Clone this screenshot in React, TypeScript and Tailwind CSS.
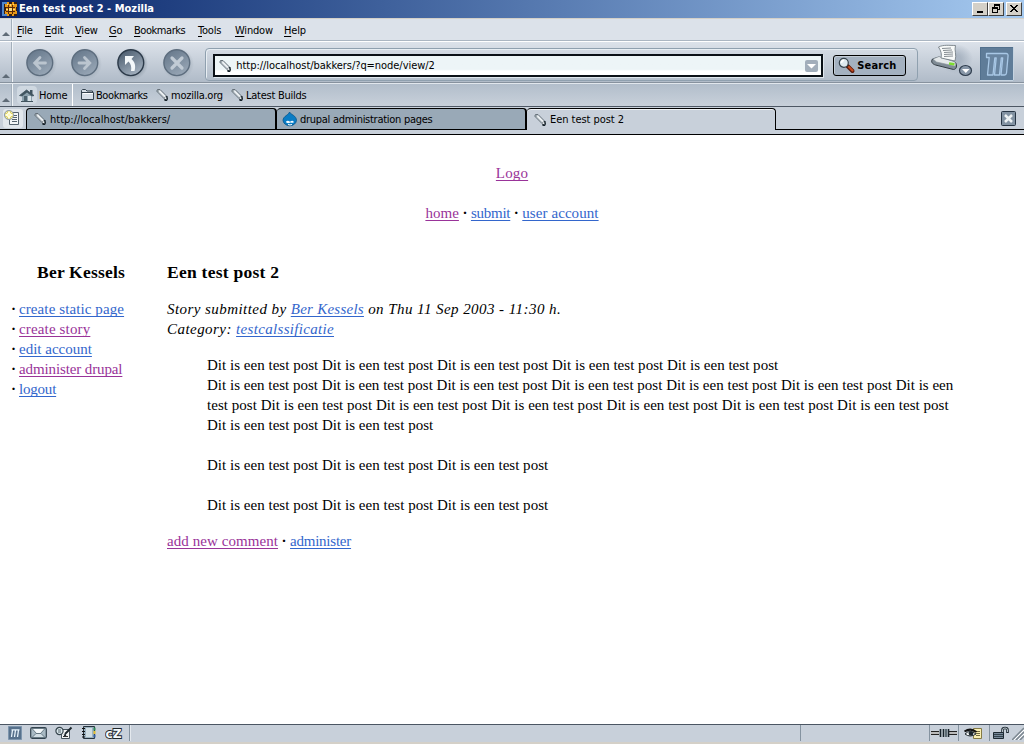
import React from "react";

const ui = "font-['DejaVu_Sans_Condensed','DejaVu_Sans',sans-serif]";

function MozillaAppIcon() {
  return (
    <svg width="16" height="16" viewBox="0 0 16 16" shapeRendering="crispEdges">
      <rect x="1" y="1" width="14" height="14" fill="#3a2010" />
      <path d="M0 1h5v2H2v10h3v2H0z" fill="#4f86cc" />
      <path d="M3 3h2V1h2v2h3V1h2v2h3v3h-1v4h1v3h-3v2h-2v-2H7v2H5v-2H3v-3h1V6H3z" fill="#e89818" />
      <path d="M6 4h1v2h3V4h1v2h2v1h-2v3h2v1h-2v2h-1v-2H7v2H6v-2H4v-1h2V7H4V6h2z" fill="#5a2808" />
      <path d="M7 7h3v3H7z" fill="#ffe080" />
      <path d="M5 3h1v1H5zm3 0h1v2H8zm3 0h1v1h-1zM4 8h2v1H4zm7 0h2v1h-2z" fill="#ffe080" />
    </svg>
  );
}

function TagIcon() {
  return (
    <svg width="14" height="14" viewBox="0 0 14 14" className="shrink-0">
      <path d="M2.500 1.500h2.500l6.500 6.500-2.500 2.500-7-7V2.500z" fill="#c3cbd1" stroke="#5c6870" strokeWidth=".9" />
      <path d="m4.500 3 5.500 5.500" stroke="#f4f7f8" strokeWidth="1.200" />
      <path d="m11.500 8 1 3-1 1-2.500-1" fill="#e6eaec" stroke="#17222a" />
      <path d="M12 8v4.500H9.500" fill="none" stroke="#17222a" />
      <path d="M2.500 2.500h1v1h-1z" fill="#46545e" />
    </svg>
  );
}

function RoundIcon({ id, kind }: { id: string; kind: "back" | "forward" | "reload" | "stop" }) {
  const active = kind === "reload";
  return (
    <svg width="34" height="34" viewBox="0 0 34 34">
      <defs>
        <linearGradient id={id} x1="0.2" y1="0" x2="0.8" y2="1">
          <stop offset="0" stopColor={active ? "#4a5b6d" : "#66788b"} />
          <stop offset="1" stopColor={active ? "#a9b6c4" : "#9ba9b8"} />
        </linearGradient>
        <radialGradient id={id + "h"}>
          <stop offset=".75" stopColor="#9aa6b2" />
          <stop offset="1" stopColor="#9aa6b2" stopOpacity="0" />
        </radialGradient>
      </defs>
      <circle cx="18" cy="18" r="16" fill={"url(#" + id + "h)"} opacity={active ? ".8" : ".4"} />
      <circle cx="16.800" cy="16.700" r="12.900" fill={"url(#" + id + ")"} stroke={active ? "#2c3a49" : "#5d6d7e"} strokeWidth="1.400" />
      {kind === "back" && <path d="M22.500 17H12m5-5.500L11.700 17l5.300 5.500" fill="none" stroke="#bbc5cf" strokeWidth="2.800" strokeLinecap="round" />}
      {kind === "forward" && <path d="M11 17h10.500m-5-5.500 5.300 5.500-5.300 5.500" fill="none" stroke="#bbc5cf" strokeWidth="2.800" strokeLinecap="round" />}
      {kind === "stop" && <path d="m12 12 10 10m0-10L12 22" stroke="#c1cbd5" strokeWidth="3.200" strokeLinecap="round" />}
      {active && <path d="M11 19v-9h9l-2.500 3c3.500 3 4.500 7 3 12h-3.500c.8-4 0-7-2.500-9.500z" fill="#f4f8fa" />}
    </svg>
  );
}

function HomeIcon() {
  return (
    <svg width="22" height="20" viewBox="0 0 22 20">
      <rect x="1" y="1" width="20" height="18" rx="4" fill="#cfd8e1" />
      <path d="M6 9v7h10V9l-5-4z" fill="#8da2ae" />
      <path d="M14 5h2.500v4H14z" fill="#40545f" />
      <path d="m3.500 10.500 7-5.500 7.500 5.500-2 .5-5-4-5 4z" fill="#40545f" stroke="#40545f" strokeWidth=".8" />
      <path d="M8 11h3v5H8z" fill="#4d626e" />
      <path d="M12 11h3v5h-3z" fill="#d7e1e6" />
      <path d="M5 16.500h12" stroke="#41535e" />
    </svg>
  );
}

function FolderIcon() {
  return (
    <svg width="15" height="13" viewBox="0 0 15 13" className="-mt-px">
      <path d="M1.500 11.500v-9l1-1h3l1.500 1.500h5.500v2h1v6.500z" fill="#d6dee7" stroke="#35434f" />
      <path d="M1.500 4.500h12" stroke="#35434f" />
      <path d="M3 5.500h10" stroke="#fff" />
    </svg>
  );
}

function NewTabIcon() {
  return (
    <svg width="20" height="19" viewBox="0 0 20 19">
      <rect x="0" y="0" width="20" height="19" rx="3" fill="#e2e7ec" />
      <path d="M6.500 3.500h9v12h-9z" fill="#f4f6f7" stroke="#56636e" />
      <path d="M10 6.500h4M10 8.500h4M9 10.500h5M9 12.500h5" stroke="#56636e" />
      <circle cx="6" cy="6" r="4.600" fill="#d9cf6a" stroke="#93a0b0" />
      <path d="M6 2.500v7M2.500 6h7" stroke="#fffde0" strokeWidth="2" />
      <path d="m3.200 3.200 5.600 5.600m0-5.600L3.200 8.800" stroke="#fff9bb" />
    </svg>
  );
}

function DropIcon() {
  return (
    <svg width="16" height="16" viewBox="0 0 16 16" className="shrink-0">
      <path d="M7.500 1C8.500 3.500 14.500 4.500 14.500 9.500a6.800 6 0 0 1-13.500 0C1 5 7 4 7.500 1z" fill="#0a7cc4" stroke="#08568c" strokeWidth=".8" />
      <path d="M4 10.800c.8-1.500 2.800-1.200 4 0 1.200-1.200 2.800-1.600 3.600-.4s-1.200 2-3.200 1c-1.600 1.200-4 1.200-4.400-.6z" fill="#f4fbff" />
      <path d="M6 13.500q2 .9 4 0" fill="none" stroke="#fff" />
    </svg>
  );
}

function SearchIcon() {
  return (
    <svg width="18" height="17" viewBox="0 0 18 17">
      <path d="m9.500 9 5 5" stroke="#5b1c0c" strokeWidth="4" strokeLinecap="round" />
      <path d="m11 10 3.500 3.500" stroke="#c64b21" strokeWidth="2" strokeLinecap="round" />
      <circle cx="5.800" cy="5.800" r="4.500" fill="#dfe9ee" stroke="#35414a" strokeWidth="1.200" />
      <path d="M3.500 6q0-2.500 2.500-2.800" fill="none" stroke="#fff" strokeWidth="1.500" />
    </svg>
  );
}

function PrinterIcon() {
  return (
    <svg width="44" height="34" viewBox="0 0 44 34">
      <defs>
        <radialGradient id="printerShade">
          <stop offset=".3" stopColor="#a3afbd" />
          <stop offset="1" stopColor="#a3afbd" stopOpacity="0" />
        </radialGradient>
      </defs>
      <ellipse cx="26" cy="15" rx="17" ry="15" fill="url(#printerShade)" opacity=".8" />
      <path d="M2.500 15c-2 3 0 5 3 6l18 4.500c3 0 4-4 2-7L9 13z" fill="#7f8b95" stroke="#333d45" />
      <path d="m3 15 6-2.500 16 5.500.8 3-1.300 1-18-4z" fill="#e4e8ea" stroke="#8a949c" strokeWidth=".6" />
      <path d="M11 14c1-4 0-7-2.500-11 5-2.500 11-1.500 17-1.500C24 6 27 11 25 17z" fill="#f8faf9" stroke="#68727a" strokeWidth=".8" />
      <path d="m12 4.500 9-.5m-8 2.500 9-.5m-8 2.500 9-.5m-9 2.500 9-.5m-9 2.500 9-.5" stroke="#788087" strokeWidth=".9" />
      <path d="m19 19.500 5.500.8" stroke="#7ddc30" strokeWidth="2.400" />
      <ellipse cx="35.500" cy="26.500" rx="6" ry="5" fill="#8897a8" stroke="#303e4e" strokeWidth="1.200" />
      <path d="M32 25h7.500l-3.700 4z" fill="#fff" />
    </svg>
  );
}

function Throbber() {
  return (
    <svg width="34" height="34" viewBox="0 0 34 34">
      <path d="M0 0h34v34H0z" fill="#5f7c98" />
      <path d="M.5 33.500V.5h33" fill="none" stroke="#52708d" />
      <path d="M0 33.500h33.500V0" fill="none" stroke="#c5d3e0" />
      <path d="M6.500 6.500H26q2.500 0 2 3L26.500 26q-.3 2-2 2h-3.500l1.700-17h-1.400l-1.800 17h-5l1.700-17h-1.400L13 28H7.500l1.700-17.500H6.500z" fill="#6985a1" stroke="#a9c8e6" strokeWidth="1.300" strokeLinejoin="round" />
    </svg>
  );
}

function Grippy() {
  return (
    <div className="flex w-3 shrink-0 items-end justify-center border-r border-[#a3afbb] pb-1 shadow-[1px_0_0_#f0f4f7]">
      <svg width="8" height="4" viewBox="0 0 8 4" className="ml-px"><path d="M0 4 4 0l4 4z" fill="#5f6b77" /></svg>
    </div>
  );
}

function WindowButton({ kind }: { kind: "min" | "restore" | "close" }) {
  return (
    <div className={"flex h-[14px] w-4 items-center justify-center border border-t-white border-l-white border-r-[#404040] border-b-[#404040] bg-[#d4d0c8]" + (kind === "close" ? " ml-0.5" : "")}>
      <svg width="12" height="10" viewBox="0 0 12 10" shapeRendering="crispEdges">
        {kind === "min" && <path d="M3 7h6v2H3z" />}
        {kind === "restore" && <path d="M4 0h6v6H8V5h1V2H5v1H4zM2 3h6v6H2zm1 2v3h4V5z" fillRule="evenodd" />}
        {kind === "close" && <path d="M2 1h2v1h1v1h2V2h1V1h2v1H9v1H8v1H7v1h1v1h1v1h1v1H8V7H7V6H5v1H4v1H2V7h1V6h1V5h1V4H4V3H3V2H2z" />}
      </svg>
    </div>
  );
}

function MenuItem({ name, className }: { name: string; className: string }) {
  return (
    <span className={"shrink-0 " + className}>
      <span className="underline decoration-1 underline-offset-[1.5px]">{name[0]}</span>
      {name.slice(1)}
    </span>
  );
}

function Link({ children, visited = false, className = "" }: { children: React.ReactNode; visited?: boolean; className?: string }) {
  return (
    <a href="#" className={"underline decoration-1 underline-offset-[2px] [text-decoration-skip-ink:none] " + (visited ? "text-[#993399] " : "text-[#3366cc] ") + className}>
      {children}
    </a>
  );
}

function Dot() {
  return <b className="inline-block w-[12px] text-center">·</b>;
}

function SideItem({ children }: { children: React.ReactNode }) {
  return (
    <li className="flex">
      <b className="w-[8px]">·</b>
      {children}
    </li>
  );
}

function StatusIcons() {
  return (
    <div className="flex h-4 w-[130px] shrink-0 items-center gap-2 border-r border-[#8593a0] pl-[8px]">
      <svg width="14" height="14" viewBox="0 0 14 14"><path d="M.5.5h13v13H.5z" fill="#57718c" stroke="#7d95ad" /><path d="M3.500 11 4.500 4m2 7 1-7m2 7 1-7M3.500 3.800h8" fill="none" stroke="#e8f4fc" strokeWidth="1.300" /></svg>
      <svg width="17" height="12" viewBox="0 0 17 12"><rect x=".7" y=".7" width="15.600" height="10.600" rx="1.500" fill="#a9bac4" stroke="#33434e" strokeWidth="1.200" /><path d="m2 1.500 4.500 5h4l4.500-5z" fill="#f2f7f9" stroke="#566873" strokeWidth=".8" /><path d="m2 10.500 4-4h5l4 4z" fill="#d2dee4" stroke="#566873" strokeWidth=".8" /></svg>
      <svg width="19" height="14" viewBox="0 0 19 14"><path d="M6.500 3.500h8v9h-8z" fill="#f3f6f7" stroke="#47545d" /><path d="M8 10.500h5" stroke="#333" /><circle cx="4.500" cy="5" r="3.600" fill="#dbe8ed" stroke="#35434b" strokeWidth="1.200" /><path d="M3 4h3M3 6h3" stroke="#55626b" /><path d="m10 8 6.500-6.500M9 9.500l2-.7" stroke="#1f292f" strokeWidth="1.900" /></svg>
      <svg width="15" height="14" viewBox="0 0 15 14"><path d="M1.500.5h11v12h-11z" fill="#9db2c0" stroke="#26333d" /><path d="M4 2h6v9H4z" fill="#d0dde3" /><path d="M0 2.500h3m-3 3h3m-3 3h3m-3 2.500h3" stroke="#111" /><path d="M11.500 1.500h2v3h-2z" fill="#2d8a56" /><path d="M11.500 5h2v3h-2z" fill="#e4be31" /><path d="M11.500 8.500h2v3h-2z" fill="#315da0" /></svg>
      <svg width="18" height="13" viewBox="0 0 18 13"><text x="0.500" y="11" fontFamily="DejaVu Sans" fontWeight="bold" fontSize="12" textLength="16" lengthAdjust="spacingAndGlyphs" fill="#f7fafb" stroke="#1d262c" strokeWidth="1.800" paintOrder="stroke">cZ</text></svg>
    </div>
  );
}

export default function App() {
  const line = "Dit is een test post";
  return (
    <div className="flex h-[744px] w-[1024px] flex-col overflow-hidden bg-white text-black">
      <header className={"shrink-0 whitespace-nowrap text-[11px] " + ui}>
        <div className="flex h-[18px] items-center bg-gradient-to-r from-[#0a246a] to-[#a6caf0] pr-0.5 pl-0.5">
          <MozillaAppIcon />
          <span className="ml-px grow pt-px text-[11px] font-bold tracking-[0.02px] text-white">Een test post 2 - Mozilla</span>
          <WindowButton kind="min" />
          <WindowButton kind="restore" />
          <WindowButton kind="close" />
        </div>

        <div className="flex h-[23px] border-t border-b border-t-[#d4d0c8] border-b-[#abb6c2] bg-[#dce2ea]">
          <Grippy />
          <nav className="flex items-center pt-[3px] pl-[5px] tracking-[-0.2px]">
            <MenuItem name="File" className="w-7" />
            <MenuItem name="Edit" className="w-[30px]" />
            <MenuItem name="View" className="w-[34px]" />
            <MenuItem name="Go" className="w-[25px]" />
            <MenuItem name="Bookmarks" className="w-[64px] tracking-[-0.45px]" />
            <MenuItem name="Tools" className="w-[37px]" />
            <MenuItem name="Window" className="w-[49px]" />
            <MenuItem name="Help" className="w-7" />
          </nav>
        </div>

        <div className="flex h-[42px] border-t border-b border-t-white border-b-[#87929e] bg-gradient-to-b from-[#dce2ea] to-[#b0bbc8]">
          <Grippy />
          <div className="flex items-center gap-[11.800px] pt-px pl-[10.500px]">
            <RoundIcon id="back" kind="back" />
            <RoundIcon id="forward" kind="forward" />
            <RoundIcon id="reload" kind="reload" />
            <RoundIcon id="stop" kind="stop" />
          </div>
          <div className="mt-[6px] ml-[11.400px] flex h-[33px] w-[713px] shrink-0 items-center rounded-[4px] border border-[#8fa0af] pt-[2px] pl-[7px] shadow-[inset_1px_1px_0_#e8eef3]">
            <div className="flex h-[23px] w-[610px] items-center border-2 border-t-[#0a1016] border-r-[#0a1016] border-b-[#0a1016] border-l-[#0a1016] bg-gradient-to-b from-[#edf5f7] from-70% to-white to-80% pl-[3px] shadow-[1px_1px_0_#dfe6ec]">
              <TagIcon />
              <span className="ml-[4px] grow pt-[2px] tracking-[-0.05px]">http://localhost/bakkers/?q=node/view/2</span>
              <span className="mr-[3px] flex h-[12px] w-[13px] items-center justify-center rounded-[2px] bg-[#a2aebb]">
                <svg width="9" height="6" viewBox="0 0 9 6"><path d="M0 1h9L4.500 5.500z" fill="#fff" /></svg>
              </span>
            </div>
            <button className="ml-[10px] flex h-[21px] w-[73px] items-center rounded-[3px] border border-black bg-[#a4b1c0] pl-[4px] font-bold shadow-[inset_1px_1px_0_#c3ccd6]">
              <SearchIcon />
              <span className="ml-[1px] pt-[2px] tracking-[0.15px]">Search</span>
            </button>
          </div>
          <div className="mt-[2px] ml-[12px]"><PrinterIcon /></div>
          <div className="mt-[5px] ml-[6px]"><Throbber /></div>
        </div>

        <div className="flex h-[23px] border-t border-t-[#e1e7ed] bg-gradient-to-b from-[#b2becb] to-[#c8d0da]">
          <Grippy />
          <div className="flex w-[61px] items-center border-r border-white pl-[4px]">
            <HomeIcon /><span className="ml-[1px] pt-[2px] tracking-[-0.2px]">Home</span>
          </div>
          <div className="flex items-center pl-[7px]">
            <FolderIcon /><span className="ml-px w-[59px] pt-[2px] tracking-[-0.42px]">Bookmarks</span>
            <TagIcon /><span className="ml-[2px] w-[59px] pt-[2px] tracking-[-0.25px]">mozilla.org</span>
            <TagIcon /><span className="ml-[2px] pt-[2px] tracking-[-0.25px]">Latest Builds</span>
          </div>
        </div>

        <div className="flex h-[29px] flex-col border-t border-b border-t-[#4d5764] border-b-black bg-[#c8d0da]">
          <div className="flex h-[23px] items-stretch">
            <div className="flex w-[26px] items-center border-b border-black pl-[3px]"><NewTabIcon /></div>
            <div className="mt-[1px] flex w-[251px] items-center rounded-t-[4px] border border-r-2 border-black bg-[#99a9b7] pl-[6px]">
              <TagIcon /><span className="ml-[3px] pt-[3px] tracking-[0px]">http://localhost/bakkers/</span>
            </div>
            <div className="mt-[1px] flex w-[250px] items-center rounded-t-[4px] border border-r-2 border-l-0 border-black bg-[#99a9b7] pl-[5px]">
              <DropIcon /><span className="ml-[2px] pt-[3px] tracking-[-0.27px]">drupal administration pages</span>
            </div>
            <div className="mt-[1px] flex w-[249px] items-center rounded-t-[4px] border border-b-0 border-l-0 border-black bg-[#c8d0da] pl-[6px] shadow-[inset_0_1px_0_#eef1f4]">
              <TagIcon /><span className="ml-[3px] pt-[2px] tracking-[-0.05px]">Een test post 2</span>
            </div>
            <div className="flex grow items-center justify-end border-b border-black pr-[8px]">
              <svg width="15" height="15" viewBox="0 0 15 15"><rect x=".5" y=".5" width="14" height="14" rx="1" fill="#8292a2" stroke="#273544" /><path d="m4 4 7 7m0-7-7 7" stroke="#edf2f4" strokeWidth="2.500" /></svg>
            </div>
          </div>
        </div>
      </header>

      <main className="h-[589px] shrink-0 font-['Liberation_Serif',serif] text-[15px] leading-5 whitespace-nowrap">
        <div className="pt-[28px] text-center"><Link visited className="tracking-[0.15px]">Logo</Link></div>
        <div className="pt-5 text-center">
          <Link visited className="tracking-[0.05px]">home</Link><Dot /><Link className="tracking-[-0.25px]">submit</Link><Dot /><Link className="tracking-[0.08px]">user account</Link>
        </div>
        <div className="flex pt-[39px]">
          <aside className="w-[167px]">
            <h3 className="w-[162px] text-center text-[17.500px] font-bold tracking-[0.2px]">Ber Kessels</h3>
            <ul className="pt-[17px] pl-[11px]">
              <SideItem><Link className="tracking-[0.1px]">create static page</Link></SideItem>
              <SideItem><Link visited className="tracking-[0.15px]">create story</Link></SideItem>
              <SideItem><Link>edit account</Link></SideItem>
              <SideItem><Link visited className="tracking-[-0.12px]">administer drupal</Link></SideItem>
              <SideItem><Link className="tracking-[-0.2px]">logout</Link></SideItem>
            </ul>
          </aside>
          <article>
            <h3 className="text-[17.500px] font-bold tracking-[0.25px]">Een test post 2</h3>
            <p className="pt-[17px] tracking-[0.44px] italic">
              Story submitted by <Link className="tracking-[0.25px]">Ber Kessels</Link> on Thu 11 Sep 2003 - 11:30 h.<br />
              <span className="tracking-[0.45px]">Category: </span><Link className="tracking-[0.32px]">testcalssificatie</Link>
            </p>
            <div className="pt-4 pl-10 tracking-[0.02px]">
              <p>{[line, line, line, line, line].join(" ")}</p>
              <p className="tracking-[0.01px]">{[line, line, line, line, line, line].join(" ")} Dit is een</p>
              <p className="tracking-[0.034px]">test post {[line, line, line, line, line, line].join(" ")}</p>
              <p>{line} {line}</p>
              <p className="pt-5">{[line, line, line].join(" ")}</p>
              <p className="pt-5">{[line, line, line].join(" ")}</p>
            </div>
            <div className="pt-4"><Link visited className="tracking-[0.07px]">add new comment</Link><Dot /><Link className="tracking-[-0.23px]">administer</Link></div>
          </article>
        </div>
      </main>

      <footer className="flex h-5 shrink-0 items-stretch border-t border-b-2 border-t-[#4b5663] border-b-[#d4d0c8] bg-[#c8d0da]">
        <StatusIcons />
        <div className="flex h-4 grow border-l border-[#e4e9ee]"><div className="w-[670px] border-r border-[#8593a0]" /></div>
        <div className="flex h-4 w-[29px] items-center border-l border-[#8593a0]">
          <svg width="28" height="12" viewBox="0 0 28 12"><path d="M1 6h8m10 0h8" stroke="#222" strokeWidth="4" /><path d="M1 6h8m10 0h8" stroke="#eee" strokeWidth="1.500" /><path d="M9 2h10v8H9z" fill="#c7d2d8" /><path d="M10.500 2v8m3-8v8m5-8v8" stroke="#18232b" strokeWidth="1.600" /><path d="M16 2v8" stroke="#5d6c75" strokeWidth="2" /></svg>
        </div>
        <div className="flex h-4 w-[31px] items-center border-l border-[#8593a0] pl-[4px]">
          <svg width="21" height="13" viewBox="0 0 21 13"><path d="M10.500 1.500h8v10h-8z" fill="#faf0b4" stroke="#857b45" /><path d="M13 4.500h4m-4 2h4m-4 2h4" stroke="#72693e" /><path d="M2 7q5-5 11 0-6 4-11 0z" fill="#f4f6f6" stroke="#20292f" /><path d="M1.500 4.500q6-4 12 .5" fill="none" stroke="#111" strokeWidth="2" /><circle cx="8" cy="6.500" r="2.300" fill="#1a252b" /></svg>
        </div>
        <div className="flex h-4 w-[35px] items-center justify-between border-l border-[#8593a0] pl-[2px]">
          <svg width="19" height="14" viewBox="0 0 19 14"><path d="M10.500 7V4q0-2 2.500-2t2.500 2v3" fill="none" stroke="#1e2a32" strokeWidth="2.600" /><path d="M10.500 7V4q0-2 2.500-2t2.500 2v2" fill="none" stroke="#c9d4da" strokeWidth=".9" /><path d="M1.500 6.500h10v6h-10z" fill="#789" stroke="#1e2a32" /><path d="M2 8.500h9m-9 2h9" stroke="#34434d" /></svg>
          <svg width="12" height="14" viewBox="0 0 12 14"><path d="M0 14 12 2M4 14l8-8M8 14l4-4" stroke="#7c8790" strokeWidth="1.500" /><path d="m2 14 10-10M6 14l6-6" stroke="#fff" /></svg>
        </div>
      </footer>
    </div>
  );
}
